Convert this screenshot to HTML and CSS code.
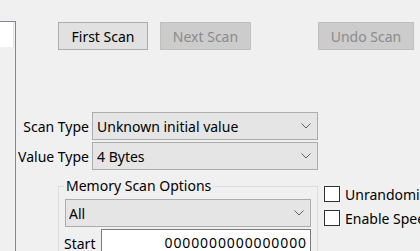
FILE: index.html
```html
<html>
<head>
  <title>Scan</title>
  <link rel="stylesheet" href="styles.css">
</head>
<body>
  <div class="window">
    <div class="address-list">
      <div class="list-rows"></div>
    </div>
    <div class="scan-panel">
      <div class="scan-buttons">
        <button class="btn first">First Scan</button>
        <button class="btn next" disabled>Next Scan</button>
        <button class="btn undo" disabled>Undo Scan</button>
      </div>

      <div class="field-row scan-type">
        <span class="field-label">Scan Type</span>
        <div class="combo">
          Unknown initial value
          <svg class="chevron" width="10" height="6" viewBox="0 0 10 6"><polyline points="0.5,0.5 5,5 9.5,0.5" fill="none" stroke="#606060" stroke-width="1"/></svg>
        </div>
      </div>
      <div class="field-row">
        <span class="field-label">Value Type</span>
        <div class="combo">
          4 Bytes
          <svg class="chevron" width="10" height="6" viewBox="0 0 10 6"><polyline points="0.5,0.5 5,5 9.5,0.5" fill="none" stroke="#606060" stroke-width="1"/></svg>
        </div>
      </div>

      <div class="options-row">
        <fieldset class="mem-options">
          <legend>Memory Scan Options</legend>
          <div class="combo combo-all">
            All
            <svg class="chevron" width="10" height="6" viewBox="0 0 10 6"><polyline points="0.5,0.5 5,5 9.5,0.5" fill="none" stroke="#606060" stroke-width="1"/></svg>
          </div>
          <div class="start-row">
            <span class="start-label">Start</span>
            <div class="edit">0000000000000000</div>
          </div>
        </fieldset>
        <div class="checks">
          <label class="check"><span class="box"></span>Unrandomizer</label>
          <label class="check"><span class="box"></span>Enable Speedhack</label>
        </div>
      </div>
    </div>
  </div>
</body>
</html>
```

FILE: styles.css
```css
body {
  margin: 0;
  background-color: #f0f0f0;
  font-family: "Noto Sans", "Open Sans", sans-serif;
  font-size: 14px;
  color: #000000;
  overflow: hidden;
}

.window {
  display: flex;
  width: 420px;
  height: 251px;
  overflow: hidden;
}

/* list on the left, only its edge is visible */
.address-list {
  width: 15px;
  height: 240px;
  margin-top: 21px;
  border-top: 1px solid #828790;
  border-right: 1px solid #828790;
  flex-shrink: 0;
}

.list-rows {
  width: 13px;
  height: 25px;
  background-color: #ffffff;
  border-right: 1px solid #e3e3e3;
}

.scan-panel {
  flex: 1;
  padding-top: 22px;
  min-width: 0;
}

.scan-buttons {
  display: flex;
  margin-left: 42px;
}

.btn {
  height: 28px;
  padding: 0;
  font-family: inherit;
  font-size: 14px;
  background-color: #e1e1e1;
  border: 1px solid #adadad;
  color: #000000;
  flex-shrink: 0;
}

.btn.first {
  width: 90px;
}

.btn.next {
  width: 91px;
  margin-left: 12px;
}

.btn.undo {
  width: 96px;
  margin-left: 67px;
}

.btn[disabled] {
  background-color: #cccccc;
  border-color: #bfbfbf;
  color: #8b8b8b;
}

.field-row {
  display: flex;
  align-items: center;
  margin-top: 2px;
}

.field-row.scan-type {
  margin-top: 62px;
}

.field-label {
  width: 73px;
  padding-right: 3px;
  text-align: right;
  white-space: nowrap;
  flex-shrink: 0;
}

.combo {
  display: flex;
  align-items: center;
  justify-content: space-between;
  box-sizing: border-box;
  width: 226px;
  height: 28px;
  padding: 0 6px 0 4px;
  background-color: #e5e5e5;
  border: 1px solid #acacac;
  white-space: nowrap;
  flex-shrink: 0;
}

.chevron {
  display: block;
}

.options-row {
  display: flex;
  margin-top: 6px;
}

.mem-options {
  box-sizing: border-box;
  width: 260px;
  margin: 0 0 0 42px;
  padding: 3px 6px 0 6px;
  border: 1px solid #dcdcdc;
  min-width: 0;
  flex-shrink: 0;
}

.mem-options legend {
  margin-left: -1px;
  padding: 0 2px;
  line-height: 20px;
  white-space: nowrap;
}

.combo-all {
  width: 246px;
  padding-left: 3px;
}

.start-row {
  display: flex;
  align-items: center;
  margin-top: 2px;
}

.start-label {
  width: 37px;
  margin-left: -1px;
  flex-shrink: 0;
}

.edit {
  box-sizing: border-box;
  width: 210px;
  height: 28px;
  line-height: 26px;
  padding-right: 3px;
  text-align: right;
  letter-spacing: 0.9px;
  background-color: #ffffff;
  border: 1px solid #7a7a7a;
  flex-shrink: 0;
}

.checks {
  display: flex;
  flex-direction: column;
  padding-top: 10px;
  margin-left: 6px;
  flex-shrink: 0;
}

.check {
  display: flex;
  align-items: center;
  height: 16px;
  margin-bottom: 8px;
  white-space: nowrap;
}

.box {
  box-sizing: border-box;
  width: 16px;
  height: 16px;
  margin-right: 5px;
  background-color: #ffffff;
  border: 1px solid #333333;
  flex-shrink: 0;
}
```
